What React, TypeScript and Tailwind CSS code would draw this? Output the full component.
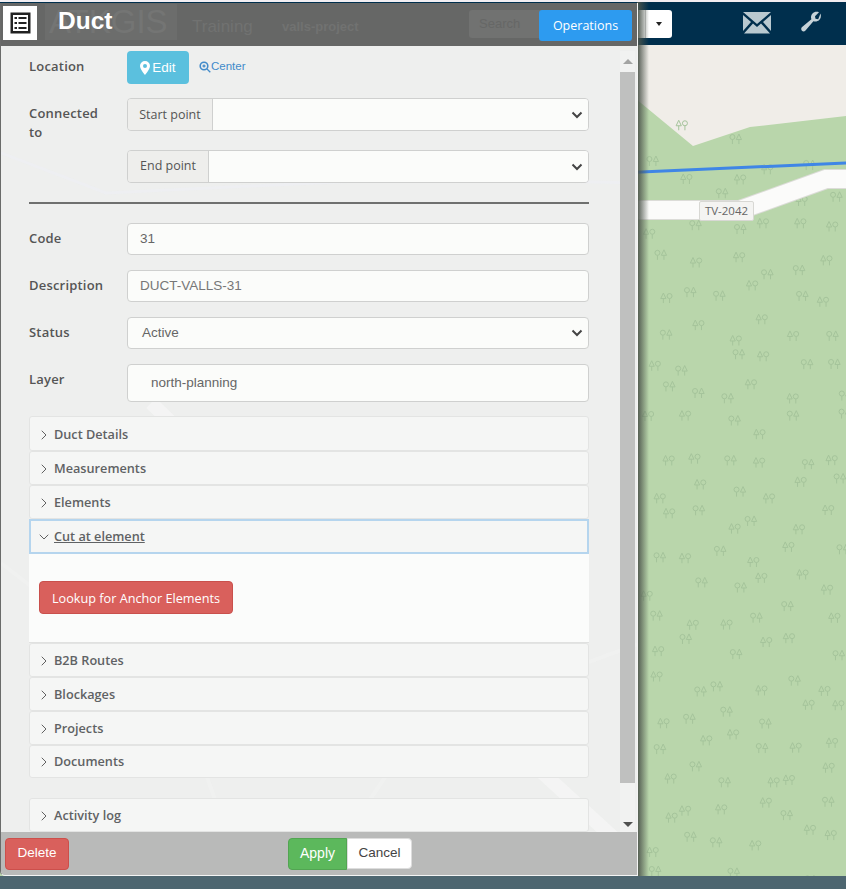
import React from "react";
import { ChevronRight, ChevronDown } from "lucide-react";

const OS = "font-['Open_Sans',sans-serif]";
const AR = "font-['Liberation_Sans',Arial,sans-serif]";

function Tree({ x, y, flip }: { x: number; y: number; flip: boolean }) {
  return (
    <g transform={`translate(${x} ${y})`} fill="none" stroke="#a5c49b" strokeWidth="1">
      {flip ? (
        <>
          <circle cx="2.5" cy="3" r="2.5" />
          <path d="M2.5 5.5V10" />
          <path d="M9 0l2.6 5.5H6.4zM9 5.5V10" />
        </>
      ) : (
        <>
          <path d="M2.8 0l2.6 5.5H.2zM2.8 5.5V10" />
          <circle cx="9" cy="3" r="2.5" />
          <path d="M9 5.5V10" />
        </>
      )}
    </g>
  );
}

const trees: { x: number; y: number; flip: boolean }[] = (() => {
  let s = 12345;
  const r = () => {
    s = (s * 16807) % 2147483647;
    return s / 2147483647;
  };
  const out: { x: number; y: number; flip: boolean }[] = [];
  for (let y = 120; y < 880; y += 32) {
    for (let x = 640; x < 846; x += 35) {
      out.push({ x: x + r() * 26, y: y + r() * 24, flip: r() > 0.5 });
    }
  }
  return out;
})();

function MapBg() {
  return (
    <svg className="absolute inset-0" width="846" height="889" viewBox="0 0 846 889">
      <rect x="0" y="0" width="846" height="889" fill="#b9d6ab" />
      <polygon points="630,45 846,45 846,116 750,127 693,146 630,94" fill="#f0ede8" />
      {trees
        .filter((t) => !(t.y < 150 && t.x > 640 && t.y < 150 - (t.x > 693 ? (846 - t.x) * 0.18 : (t.x - 640))))
        .map((t, i) => (
          <Tree key={i} {...t} />
        ))}
      <path d="M630 172.5L846 163" stroke="#3f86e6" strokeWidth="3" fill="none" />
      <path d="M630 210L740 210L826 179L846 179" stroke="#dcdcd8" strokeWidth="20" fill="none" />
      <path d="M630 210L740 210L826 179L846 179" stroke="#fbfbfa" strokeWidth="18" fill="none" />
    </svg>
  );
}

function Row({ label, children, mt }: { label: string; children: React.ReactNode; mt: string }) {
  return (
    <div className={`flex items-start ${mt}`}>
      <div className={`w-[98px] pr-[20px] pt-[6px] text-[13px] leading-[19px] font-[550] tracking-[0.2px] text-[#555] ${OS}`}>{label}</div>
      <div className="w-[462px]">{children}</div>
    </div>
  );
}

function Field({ children, h = "h-[32px]", pl = "pl-[12px]", color = "text-[#666]" }: { children?: React.ReactNode; h?: string; pl?: string; color?: string }) {
  return (
    <div className={`flex items-center ${h} ${pl} rounded-[4px] border border-[#cfd0cf] bg-[#fbfcfa] text-[13.5px] ${color} ${AR}`}>
      {children}
    </div>
  );
}

function Caret() {
  return (
    <svg width="12" height="8" viewBox="0 0 12 8" className="ml-auto mr-[5px]" fill="none" stroke="#444" strokeWidth="2">
      <path d="M1.5 1.5L6 6l4.5-4.5" />
    </svg>
  );
}

function Group({ label, w, pad = "" }: { label: string; w: string; pad?: string }) {
  return (
    <div className="flex h-[33px] rounded-[4px] border border-[#cfd0cf] overflow-hidden">
      <div className={`${w} ${pad} shrink-0 flex items-center justify-center border-r border-[#cfd0cf] bg-[#eeeeec] text-[12.5px] text-[#555] ${OS}`}>{label}</div>
      <div className="flex-1 flex items-center bg-[#fbfcfa]">
        <Caret />
      </div>
    </div>
  );
}

function Acc({ label, h = "h-[34px]", pt = "pt-[2px]" }: { label: string; h?: string; pt?: string }) {
  return (
    <div className={`flex items-center ${h} ${pt} border border-[#e3e4e3] bg-[#f5f6f5] pl-[6px] rounded-[3px]`}>
      <ChevronRight size={16} color="#555" strokeWidth={1.4} />
      <span className={`ml-[2px] text-[12.7px] font-[550] text-[#5f6264] ${OS}`}>{label}</span>
    </div>
  );
}

export default function App() {
  return (
    <div className="relative w-[846px] h-[889px] overflow-hidden bg-[#b9d6ab]">
      <MapBg />

      {/* top navigation */}
      <div className="absolute left-0 right-0 top-0 h-[2px] bg-[#f2eef2]" />
      <div className="absolute left-0 right-0 top-[2px] h-[43px] bg-[#002f4d] flex items-center">
        <div className="ml-[638px] h-[28px] w-[7px] bg-white" />
        <div className="flex h-[28px] w-[27px] items-center justify-center rounded-r-[3px] border-l border-[#ccc] bg-white">
          <div className="h-0 w-0 border-x-[3px] border-t-[4px] border-x-transparent border-t-[#222]" />
        </div>
        <svg className="ml-[71px] -mt-[2px]" width="28" height="24" viewBox="0 0 28 24" fill="#b9c9d0">
          <path d="M0 1h28L14 13zM0 4l8 7-8 9zM28 4l-8 7 8 9zM10 12.5l4 3.5 4-3.5 9 10H1z" />
        </svg>
        <svg className="ml-[29px] -mt-[3px]" width="22" height="22" viewBox="0 0 22 22" fill="#c6d3d9">
          <path d="M20.5 2.5c.9 2.5.3 5-1.3 6.6-1.6 1.5-3.8 1.9-5.8 1.1L5.5 19.5c-1 1.1-2.6 1.2-3.6.2s-.9-2.6.2-3.6l9.3-7.9c-.8-2-.4-4.2 1.1-5.8C14 1 16.5.4 19 1.3l-4 3.9.5 2.5 2.7.6z" />
        </svg>
      </div>
      <div className="absolute left-0 right-0 bottom-0 h-[13px] bg-[#4d6670]" />

      {/* shadow of the panel on the map */}
      <div className="absolute left-[637px] top-[2px] h-[874px] w-[12px] bg-gradient-to-r from-[#4d554c] to-transparent" />

      {/* feature panel */}
      <div className="absolute left-0 top-[3px] flex h-[873px] w-[638px] flex-col overflow-hidden rounded-bl-[5px] border-b border-l border-r border-b-[#f4f4f4] border-l-[#6a6b6a] border-r-[#f4f4f4] bg-[#eeefee]">
        <svg className="absolute inset-0" width="637" height="873" viewBox="0 0 637 873" fill="none" stroke="#fbfbfb" strokeOpacity="0.45">
          <path d="M0 150L105 190L420 175L640 180" strokeWidth="3" stroke="#eef0f6" />
          <path d="M150 400L400 640L640 860" strokeWidth="14" />
          <path d="M0 560L180 700L240 870" strokeWidth="4" strokeOpacity="0.2" />
          <path d="M320 870L420 720L640 640" strokeWidth="4" strokeOpacity="0.2" />
        </svg>

        <header className="relative flex h-[43px] shrink-0 items-center bg-[#666766]">
          <div className={`absolute left-[44px] top-[1px] flex h-[36px] w-[132px] items-center overflow-hidden bg-[#6c6d6c] pl-[4px] text-[33px] text-[#747574] ${AR}`}>ATKGIS</div>
          <span className={`absolute left-[191px] top-[11px] text-[17px] text-[#717271] ${AR}`}>Training</span>
          <span className={`absolute left-[281px] top-[14px] text-[13px] font-bold text-[#717271] ${AR}`}>valls-project</span>
          <div className={`absolute left-[468px] top-[7px] flex h-[28px] w-[90px] items-center rounded-[3px] bg-[#717271] pl-[10px] text-[13px] text-[#666766] ${AR}`}>Search</div>

          <div className="relative ml-[2px] mt-[-4px] flex h-[34px] w-[34px] items-center justify-center bg-white">
            <svg width="21" height="22" viewBox="0 0 21 22">
              <rect x="0.5" y="0.5" width="20" height="21" fill="#222" />
              <rect x="3" y="3" width="15" height="16" fill="#fff" />
              <path d="M4.5 6h2.5M8.5 6h8M4.5 11h2.5M8.5 11h8M4.5 16h2.5M8.5 16h8" stroke="#222" strokeWidth="2" />
            </svg>
          </div>
          <h1 className={`relative ml-[21px] mt-[-6px] text-[24.5px] font-bold text-white ${AR}`}>Duct</h1>
          <button className={`relative ml-auto mr-[5px] mt-[2px] h-[31px] w-[93px] rounded-[3px] bg-[#2d9bf0] pt-[2px] text-[12.5px] text-white ${OS}`}>Operations</button>
        </header>

        <div className="relative flex min-h-0 flex-1">
          <div className="flex-1 pl-[28px] pt-[5px]">
            <div className="flex h-[33px] items-center">
              <div className={`w-[98px] -mt-[1px] text-[13px] font-[550] tracking-[0.2px] text-[#555] ${OS}`}>Location</div>
              <button className={`flex h-[33px] w-[62px] items-center justify-center rounded-[4px] bg-[#5bc0de] pt-[2px] text-[13.5px] text-white ${AR}`}>
                <svg width="10" height="14" viewBox="0 0 10 14" fill="#fff" className="mr-[2px] -mt-[2px]">
                  <path fillRule="evenodd" d="M5 0a5 5 0 0 1 5 5c0 3-5 9-5 9S0 8 0 5a5 5 0 0 1 5-5zm0 3a2 2 0 1 0 0 4 2 2 0 0 0 0-4z" />
                </svg>
                Edit
              </button>
              <span className={`ml-[10px] -mt-[2px] flex items-center text-[11.5px] text-[#428bca] ${AR}`}>
                <svg width="12" height="12" viewBox="0 0 12 12" fill="none" stroke="#428bca" strokeWidth="1.6">
                  <circle cx="5" cy="5" r="3.8" />
                  <path d="M8 8l3.3 3.3M3.5 5h3M5 3.5v3" strokeWidth="1.3" />
                </svg>
                Center
              </span>
            </div>

            <Row label="Connected to" mt="mt-[14px]">
              <Group label="Start point" w="w-[85px]" pad="pt-[1px]" />
            </Row>
            <div className="ml-[98px] mt-[8px] w-[462px]">
              <Group label="End point" w="w-[81px]" pad="pb-[1px]" />
            </div>

            <div className="mt-[19px] h-[2px] w-[560px] bg-[#6f706f]" />

            <Row label="Code" mt="mt-[19px]">
              <Field>31</Field>
            </Row>
            <Row label="Description" mt="mt-[15px]">
              <Field color="text-[#777]">DUCT-VALLS-31</Field>
            </Row>
            <Row label="Status" mt="mt-[15px]">
              <Field pl="pl-[14px]">
                Active
                <Caret />
              </Field>
            </Row>
            <Row label="Layer" mt="mt-[15px]">
              <Field h="h-[38px]" pl="pl-[23px]">north-planning</Field>
            </Row>

            <div className="mt-[14px] w-[560px]">
              <Acc label="Duct Details" h="h-[35px]" />
              <Acc label="Measurements" />
              <Acc label="Elements" />
              <div className="flex h-[35px] items-center border-2 border-[#b5d5ee] bg-[#f5f6f5] pl-[5px]">
                <ChevronDown size={16} color="#555" strokeWidth={1.4} />
                <span className={`ml-[2px] text-[12.7px] font-[550] text-[#5f6264] underline ${OS}`}>Cut at element</span>
              </div>
              <div className="h-[89px] border-b border-[#e0e1e0] bg-[#fbfcfb] pl-[10px] pt-[27px]">
                <button className={`h-[33px] w-[194px] rounded-[4px] border border-[#c9504c] bg-[#d9605c] pt-[3px] text-[12.7px] text-white ${OS}`}>Lookup for Anchor Elements</button>
              </div>
              <Acc label="B2B Routes" />
              <Acc label="Blockages" />
              <Acc label="Projects" />
              <Acc label="Documents" h="h-[33px]" pt="pt-0" />
              <div className="mt-[20px]">
                <Acc label="Activity log" />
              </div>
            </div>
          </div>

          {/* scrollbar */}
          <div className="mr-[2px] mt-[5px] flex w-[15px] flex-col items-center bg-[#f1f2f1]">
            <div className="flex h-[21px] w-full items-center justify-center">
              <div className="h-0 w-0 border-x-[5px] border-b-[5px] border-x-transparent border-b-[#a3a4a3]" />
            </div>
            <div className="h-[711px] w-full bg-[#bfc0bf]" />
            <div className="flex flex-1 w-full items-end justify-center pb-[5px]">
              <div className="h-0 w-0 border-x-[5px] border-t-[5px] border-x-transparent border-t-[#505150]" />
            </div>
          </div>
        </div>

        <footer className="relative flex h-[43px] shrink-0 items-center bg-[#b9bab9] pl-[4px] pr-[2px]">
          <button className={`h-[32px] w-[64px] rounded-[4px] border border-[#cc4f4b] bg-[#d9605c] text-[13.5px] text-white ${AR}`}>Delete</button>
          <button className={`ml-[219px] h-[32px] w-[59px] rounded-l-[4px] border border-[#52a552] bg-[#5cb85c] text-[14px] text-white ${AR}`}>Apply</button>
          <button className={`h-[31px] w-[65px] rounded-r-[4px] border border-[#ddd] bg-white text-[13.5px] text-[#444] ${AR}`}>Cancel</button>
        </footer>
      </div>

      {/* road label */}
      <div className={`absolute left-[699px] top-[201px] flex h-[20px] w-[55px] items-center justify-center rounded-[2px] border border-[#d8d8d4] bg-[#f4f4f2] text-[11.5px] text-[#666] ${OS}`}>TV-2042</div>
    </div>
  );
}
